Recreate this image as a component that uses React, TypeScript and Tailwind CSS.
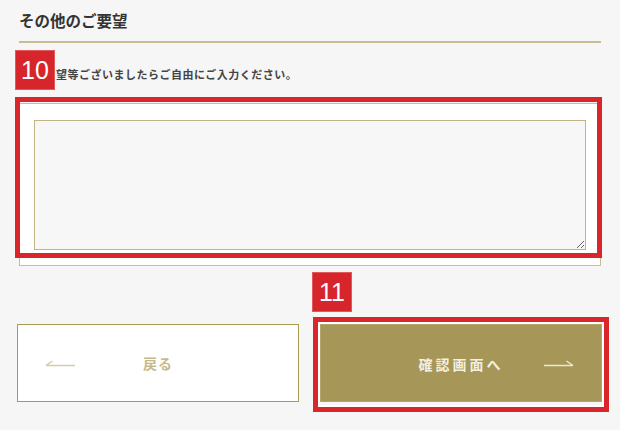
import React from "react";

const jp = { fontFamily: '"Noto Sans CJK JP", "Noto Sans", sans-serif' };

const Badge: React.FC<{ label: string; className: string }> = ({ label, className }) => (
    <div
        className={`absolute w-[40px] h-[40px] bg-[#d7262b] border border-[#e2595c] flex items-center justify-center text-white text-[25px] leading-none ${className}`}
        style={{ fontFamily: '"Liberation Sans", Arial, sans-serif' }}
    >
        {label}
    </div>
);

const ArrowLeft = () => (
    <svg width="31" height="8" viewBox="0 0 31 8" className="justify-self-start">
        <path d="M1 6.5 H30 M1 6.5 L7.5 2" stroke="#d6cca8" strokeWidth="1.5" fill="none" />
    </svg>
);

const ArrowRight = () => (
    <svg width="31" height="8" viewBox="0 0 31 8" className="justify-self-end">
        <path d="M1 6.5 H30 M30 6.5 L23.5 2" stroke="#ece6d2" strokeWidth="1.5" fill="none" />
    </svg>
);

const App: React.FC = () => {
    return (
        <div className="relative w-[620px] h-[430px] overflow-hidden bg-[#f6f6f6] px-[19px] pt-[10px]" style={jp}>
            <h2 className="text-[15.5px] leading-[20px] font-bold text-[#333] pb-[11px] border-b-2 border-[#c8bc93]">
                その他のご要望
            </h2>
            <p className="mt-[24px] pl-[37px] text-[11px] leading-[14px] font-bold text-[#444] tracking-[0.5px]">
                望等ございましたらご自由にご入力ください。
            </p>

            <div className="mt-[22px] h-[163px] bg-white border border-[#c9bd92] pt-[16px] px-[14px]">
                <textarea className="block w-full h-[130px] bg-[#f7f7f7] border border-[#c2b483] outline-none" />
            </div>

            <div className="mt-[58px] -ml-[2px] w-[585px] flex gap-[21px]">
                <button className="flex-1 h-[78px] bg-white border border-[#a89a50] px-[27px] grid grid-cols-[1fr_auto_1fr] items-center text-[14px] font-bold text-[#c6b98c] tracking-[1px]">
                    <ArrowLeft />
                    <span>戻る</span>
                    <span />
                </button>
                <button className="flex-1 h-[78px] bg-[#a69758] border border-[#b3a66c] px-[27px] grid grid-cols-[1fr_auto_1fr] items-center text-[14px] font-bold text-[#f3efe2] tracking-[3px]">
                    <span />
                    <span className="pt-[3px]">確認画面へ</span>
                    <ArrowRight />
                </button>
            </div>

            {/* annotations */}
            <Badge label="10" className="left-[15px] top-[50px]" />
            <div className="absolute left-[15px] top-[97px] w-[587px] h-[161px] border-[5px] border-[#d9262b] pointer-events-none" />
            <Badge label="11" className="left-[312px] top-[272px]" />
            <div className="absolute left-[313px] top-[317px] w-[296px] h-[95px] border-[5px] border-[#d9262b] shadow-[inset_0_0_0_2px_#fff] pointer-events-none" />
        </div>
    );
};

export default App;
